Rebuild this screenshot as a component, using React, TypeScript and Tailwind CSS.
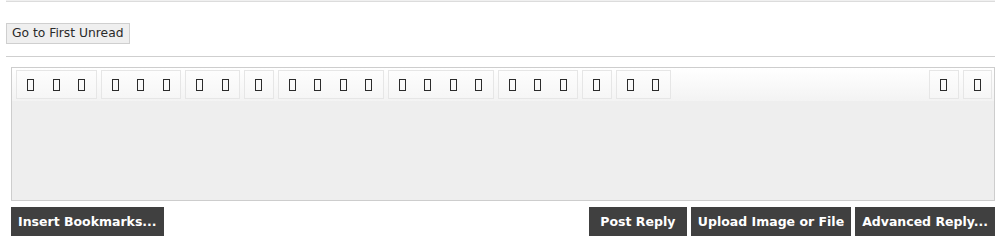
import React from 'react';

// toolbar layout: number of buttons per group, left side and right side
const leftGroups = [3, 3, 2, 1, 4, 4, 3, 1, 2];
const rightGroups = [1, 1];

function Tofu() {
  return <span className="block w-[7px] h-[12px] border border-[#2b2b2b]" />;
}

function ToolGroup({ count }: { count: number }) {
  return (
    <div className="flex h-[29px] px-[1px] border border-[#e6e6e6] bg-gradient-to-b from-[#fdfdfd] to-[#f6f6f6]">
      {Array.from({ length: count }).map((_, i) => (
        <span key={i} className="w-[25.5px] flex items-center justify-center">
          <Tofu />
        </span>
      ))}
    </div>
  );
}

function DarkButton({ label, className = '' }: { label: string; className?: string }) {
  return (
    <button
      className={`h-[29px] px-[7px] bg-[#404040] text-white font-bold text-[12.5px] leading-none whitespace-nowrap ${className}`}
    >
      {label}
    </button>
  );
}

export default function App() {
  return (
    <div
      className="w-[1003px] h-[249px] bg-white pl-[6px] pr-[8px] overflow-hidden"
      style={{ fontFamily: '"DejaVu Sans", Verdana, sans-serif' }}
    >
      <div className="h-[2px] bg-[#f0f0f0] border-b border-[#dcdcdc]" />

      <button className="mt-[21px] h-[21px] px-[5px] bg-[#efefef] border border-[#cfcfcf] text-[12.3px] text-[#2a2a2a] leading-none">
        Go to First Unread
      </button>

      <div className="mt-[12px] border-t border-[#cfcfcf]" />

      {/* Editor */}
      <div className="mt-[10px] ml-[5px] h-[134px] border border-[#cdcdcd] bg-[#eeeeee] flex flex-col">
        <div className="h-[33px] pt-[2px] px-[4px] flex justify-between bg-gradient-to-b from-white to-[#f3f3f3]">
          <div className="flex gap-[4px]">
            {leftGroups.map((c, i) => (
              <ToolGroup key={i} count={c} />
            ))}
          </div>
          <div className="flex gap-[4px] -mr-[2px]">
            {rightGroups.map((c, i) => (
              <ToolGroup key={i} count={c} />
            ))}
          </div>
        </div>
        <div className="flex-1" />
      </div>

      <div className="mt-[6px] ml-[5px] flex justify-between">
        <DarkButton label="Insert Bookmarks..." />
        <div className="flex gap-[4px]">
          <DarkButton label="Post Reply" className="w-[98px]" />
          <DarkButton label="Upload Image or File" />
          <DarkButton label="Advanced Reply..." />
        </div>
      </div>
    </div>
  );
}
